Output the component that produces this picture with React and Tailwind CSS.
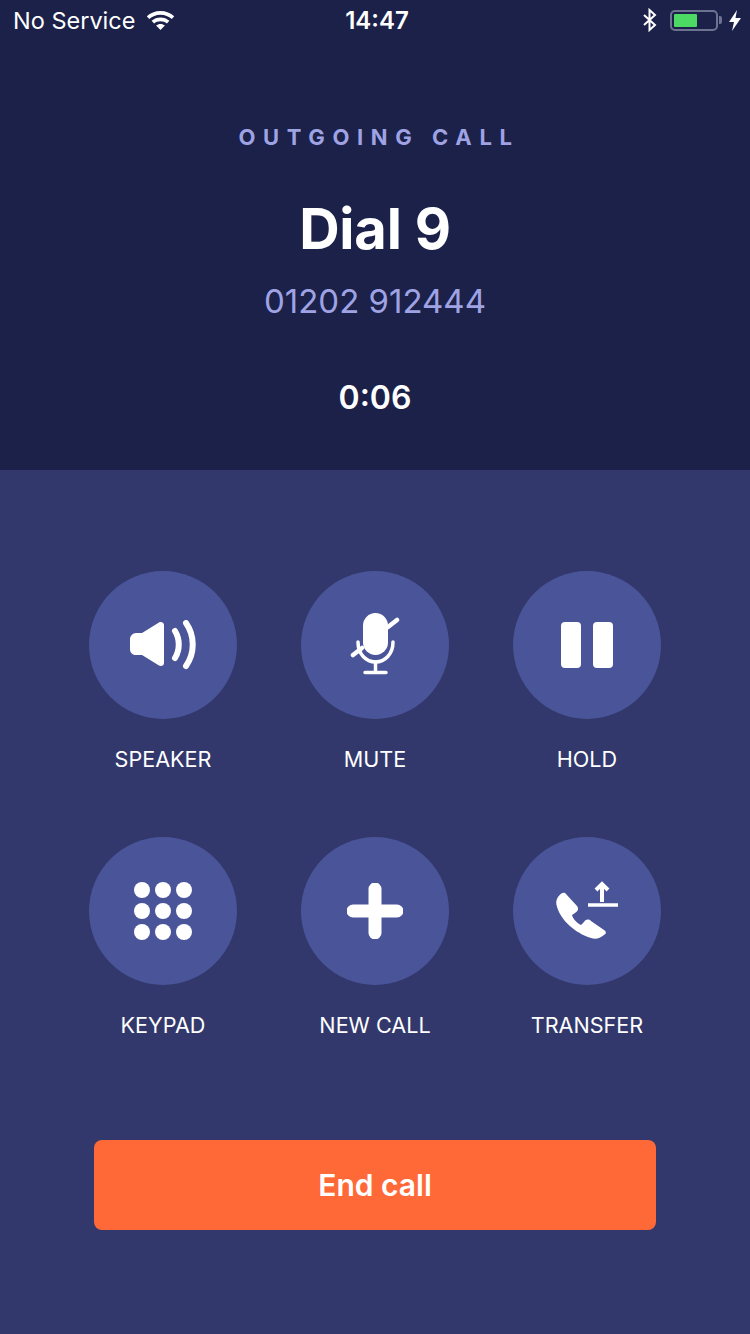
import React from "react";

const SpeakerIcon = () => (
  <svg width="68" height="50" viewBox="0 0 68 50" fill="none">
    <path d="M7 13h6L30 2.500c2-1 5 0 5 2.500v38c0 3-3 3.500-5 2.500L13 35H7c-3 0-6-2-6-6V19c0-3 3-6 6-6z" fill="white" />
    <path d="M46 11c5 8 5 19 0 27" stroke="white" strokeWidth="6" strokeLinecap="round" />
    <path d="M57 3c9 13 9 30 0 43" stroke="white" strokeWidth="6" strokeLinecap="round" />
  </svg>
);

const MicIcon = () => (
  <svg width="50" height="66" viewBox="0 0 50 66" fill="none">
    <rect x="13" y="1" width="25" height="42" rx="12.500" fill="white" />
    <path d="M8 30c0 12 8 20 17.500 20S43 42 43 30" stroke="white" strokeWidth="3.500" strokeLinecap="round" />
    <path d="M25.500 50v10M15 60.500h21" stroke="white" strokeWidth="3.500" strokeLinecap="round" />
    <path d="M3 43l9-7M38 15l9-7" stroke="white" strokeWidth="4.500" strokeLinecap="round" />
  </svg>
);

const PhoneTransferIcon = () => (
  <svg width="64" height="62" viewBox="0 0 64 62" fill="none">
    <path d="M3 17c2-3 6-6 8-3l11 12c2 3 1 5-2 7l-3 2c1 4 5 8 9 10l3-3c2-3 5-3 7-1l13 9c3 2 2 4 0 5-4 3-8 5-13 3C20 53 5 40 1.500 25c-.7-3 0-6 1.500-8z" fill="white" />
    <path d="M33 25h30" stroke="white" strokeWidth="3.500" />
    <path d="M47 22V4M41 10l6-6 6 6" stroke="white" strokeWidth="4" />
  </svg>
);

const Action = ({ label, children }) => (
  <div className="flex w-[148px] flex-col items-center">
    <div className="flex h-[148px] w-[148px] items-center justify-center rounded-full bg-[#4a5499]">
      {children}
    </div>
    <span className="mt-[26px] whitespace-nowrap text-[21.600px] leading-[28px] text-white">{label}</span>
  </div>
);

const StatusBar = () => (
  <div className="flex h-[40px] items-center justify-between pl-[13px] pr-[9px] text-white">
    <div className="flex items-center gap-[11px]">
      <span className="pt-[2px] text-[23.500px]">No Service</span>
      <svg width="29" height="20" viewBox="0 0 29 20" fill="white">
        <path d="M14.500 1C9 1 4.500 3 .8 6.300l2.400 2.800C6.300 6.400 10.100 4.800 14.500 4.800s8.200 1.600 11.300 4.300l2.400-2.800C24.500 3 20 1 14.500 1z" />
        <path d="M14.500 7.500c-3.400 0-6.400 1.200-8.900 3.300l2.500 2.800c1.700-1.500 3.900-2.300 6.400-2.300s4.700.8 6.400 2.300l2.500-2.800c-2.500-2.100-5.500-3.300-8.900-3.300z" />
        <path d="M14.500 14c-1.700 0-3.200.6-4.400 1.600l4.400 4.400 4.400-4.400c-1.200-1-2.700-1.600-4.400-1.600z" />
      </svg>
    </div>
    <div className="flex items-center">
      <svg width="15" height="24" viewBox="0 0 15 24" fill="none" stroke="white" strokeWidth="2">
        <path d="M2 7l11 10-5.500 5V2L13 7 2 17" />
      </svg>
      <div className="ml-[13px] flex h-[21px] w-[48px] items-center rounded-[5px] border-2 border-[#6d7290] p-[2px]">
        <div className="h-full w-[23px] rounded-[1px] bg-[#4cd964]" />
      </div>
      <div className="ml-[1px] h-[8px] w-[3px] rounded-r-[2px] bg-[#6d7290]" />
      <svg className="ml-[7px]" width="12" height="21" viewBox="0 0 12 21" fill="white">
        <path d="M8 0L0 12h5l-2 9 9-13H6.500L8 0z" />
      </svg>
    </div>
  </div>
);

export default function App() {
  return (
    <div className="flex h-[1334px] w-[750px] flex-col overflow-hidden bg-[#32386b] font-['Inter',sans-serif]">
      {/* Top: call details */}
      <div className="relative h-[470px] bg-[#1b2149]">
        <div className="absolute left-[318px] top-[7px] z-10 w-[118px] text-center text-[24px] font-semibold leading-[28px] text-white">
          14:47
        </div>
        <StatusBar />
        <div className="flex flex-col items-center pt-[82px]">
          <p className="pl-[8px] text-[22px] font-bold leading-[30px] tracking-[7.600px] text-[#9fa3e4]">OUTGOING CALL</p>
          <h1 className="mt-[45px] text-[56px] font-bold leading-[64px] tracking-[-0.2px] text-white">Dial 9</h1>
          <p className="mt-[18px] text-[33px] leading-[44px] text-[#9fa3e4]">01202 912444</p>
          <p className="mt-[55px] text-[32px] font-semibold leading-[40px] text-white">0:06</p>
        </div>
      </div>

      {/* Bottom: actions */}
      <div className="flex flex-1 flex-col items-center pt-[101px]">
        <div className="grid w-[572px] grid-cols-3 gap-x-[64px] gap-y-[64px]">
          <Action label="SPEAKER"><SpeakerIcon /></Action>
          <Action label="MUTE"><MicIcon /></Action>
          <Action label="HOLD">
            <div className="flex gap-[12px]">
              <div className="h-[46px] w-[20px] rounded-[4px] bg-white" />
              <div className="h-[46px] w-[20px] rounded-[4px] bg-white" />
            </div>
          </Action>
          <Action label="KEYPAD">
            <div className="grid grid-cols-3 gap-x-[5px] gap-y-[5px]">
              {[1, 2, 3, 4, 5, 6, 7, 8, 9].map((n) => (
                <div key={n} className="h-[16px] w-[16px] rounded-full bg-white" />
              ))}
            </div>
          </Action>
          <Action label="NEW CALL">
            <svg width="56" height="56" viewBox="0 0 56 56" fill="none">
              <path d="M28 6v44M6 28h44" stroke="white" strokeWidth="13" strokeLinecap="round" />
            </svg>
          </Action>
          <Action label="TRANSFER"><PhoneTransferIcon /></Action>
        </div>
        <button className="mt-[101px] flex h-[90px] w-[562px] items-center justify-center rounded-[8px] bg-[#ff6938] text-[30px] font-semibold text-white">
          End call
        </button>
      </div>
    </div>
  );
}
